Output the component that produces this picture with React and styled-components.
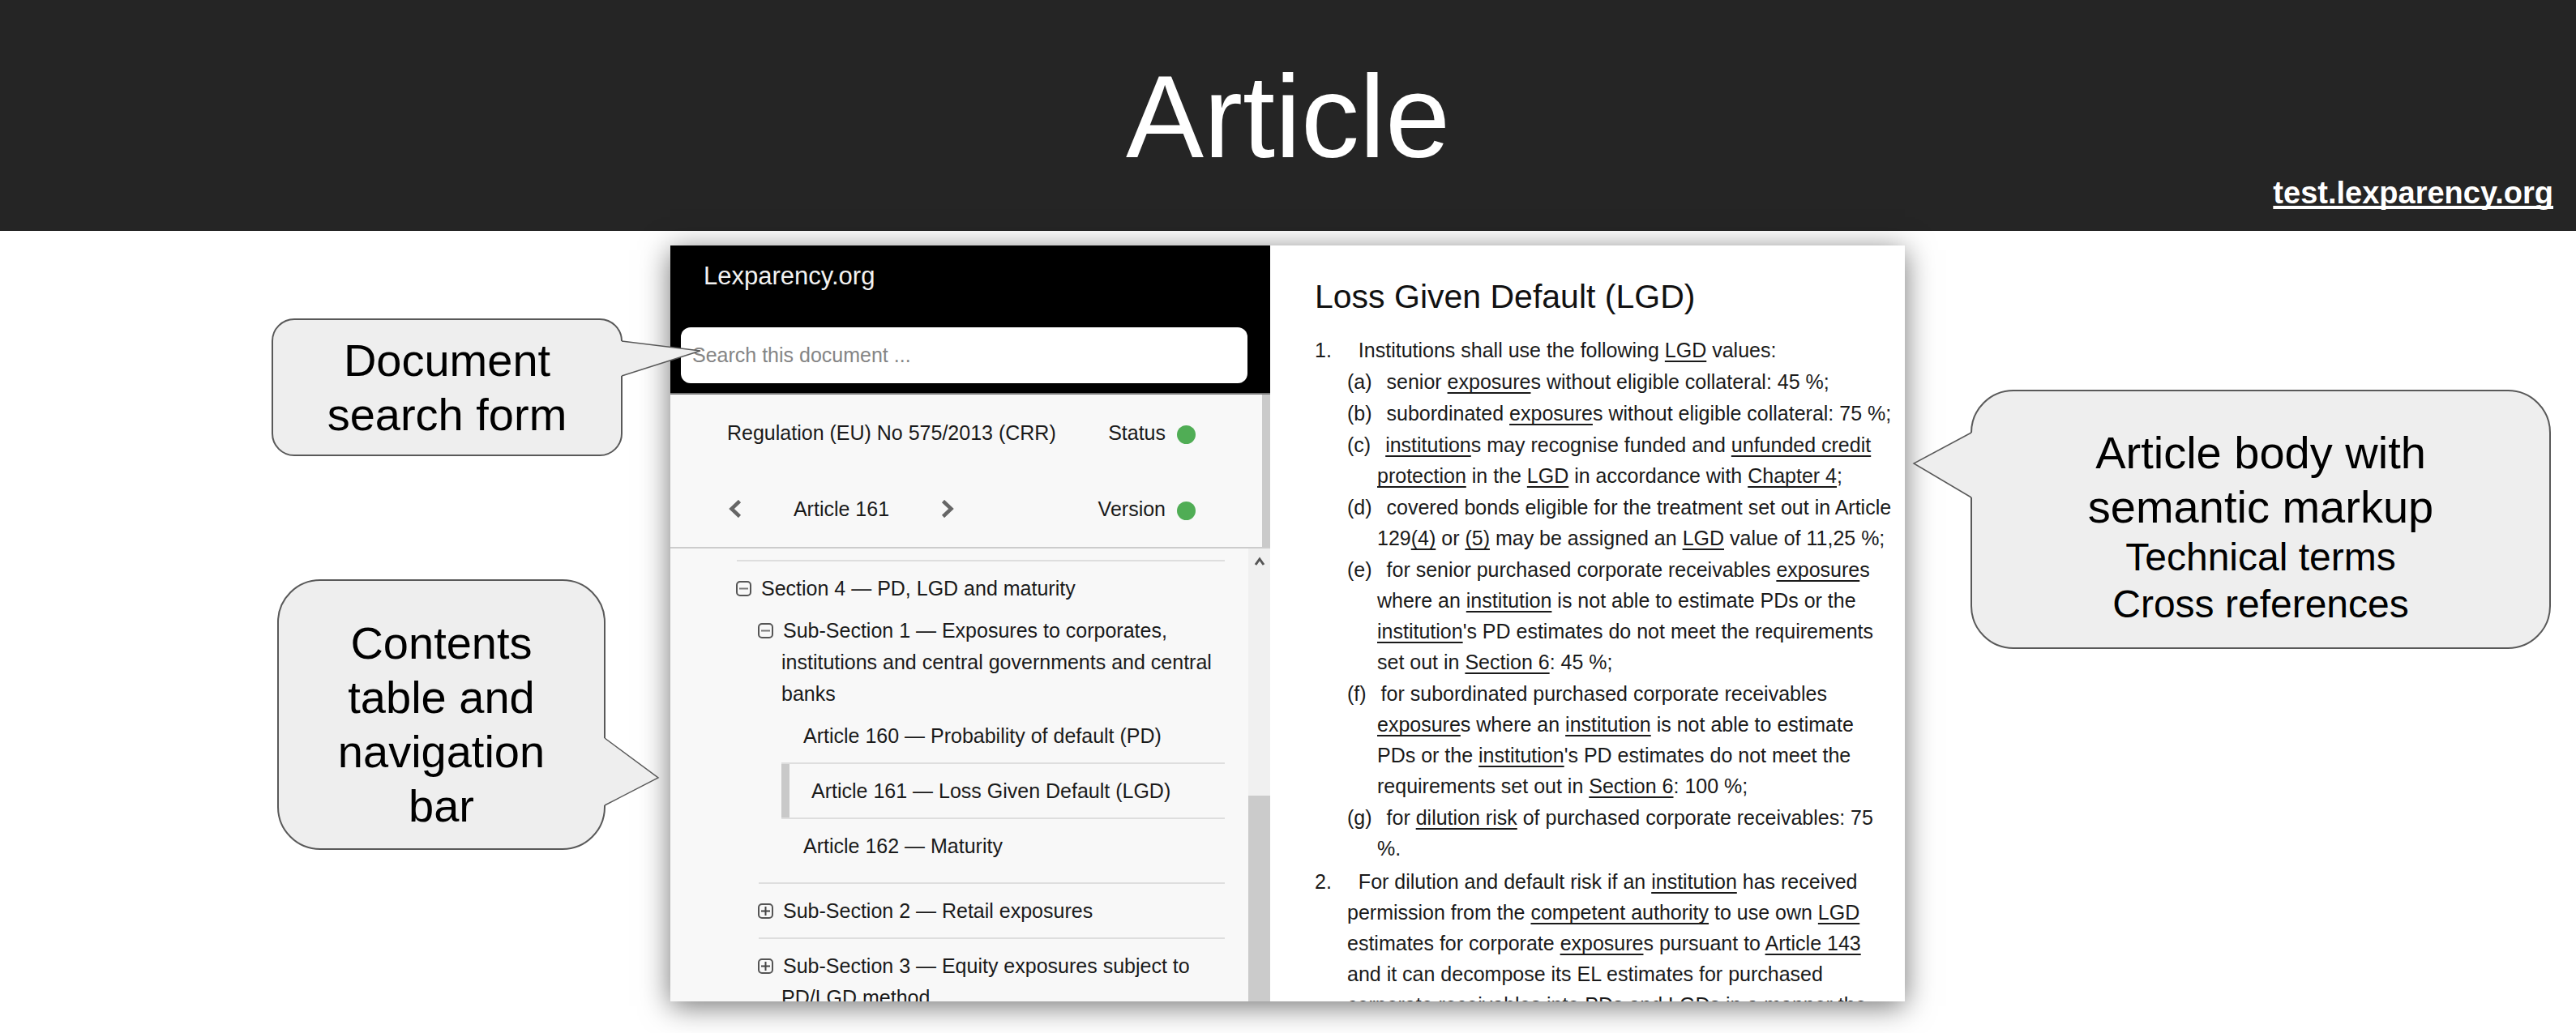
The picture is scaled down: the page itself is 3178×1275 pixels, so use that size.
import React from "react";
import styled, { createGlobalStyle } from "styled-components";

const GlobalStyle = createGlobalStyle`
  *, *::before, *::after { box-sizing: border-box; }
  body { margin: 0; background: #fff; color: #1a1a1a; font-family: "Liberation Sans", Arial, sans-serif; }
  h1, h2, p, ol, ul { margin: 0; padding: 0; font-weight: 400; }
  ol, ul { list-style: none; }
  button { border: 0; padding: 0; background: none; color: inherit; font: inherit; cursor: pointer; }
  a { color: inherit; }
`;

const Banner = styled.header`
  display: grid;
  grid-template-rows: 1fr auto;
  height: 285px;
  padding: 62px 28px 25px;
  background: #252525;
  color: #fff;
`;

const Title = styled.h1`
  font-size: 144px;
  line-height: 166px;
  height: 150px;
  text-align: center;
`;

const SiteLink = styled.a`
  justify-self: end;
  font-size: 38px;
  line-height: 44px;
  font-weight: 700;
  text-decoration-thickness: 4px;
  text-underline-offset: 3px;
  text-decoration-skip-ink: none;
`;

const Stage = styled.main`
  display: grid;
  grid-template-columns: 827fr 1523fr 828fr;
  align-items: start;
  padding: 18px 0 39px;
`;

const Side = styled.div`
  position: relative;
  z-index: 1;
  display: flex;
  flex-direction: column;
  align-items: flex-end;
  padding-top: ${(p) => p.$top}px;
  padding-right: ${(p) => p.$right || 0}px;
`;

const Bubble = styled.aside`
  position: relative;
  width: ${(p) => p.$width}px;
  padding: ${(p) => p.$pad};
  margin: ${(p) => p.$margin || "0"};
  border: 2px solid #595959;
  border-radius: ${(p) => p.$radius}px;
  background: #eee;
  color: #000;
  font-size: 56px;
  line-height: 67px;
  text-align: center;
`;

const Note = styled.p`
  font-size: 48px;
  line-height: 58px;
`;

const Tail = styled.svg`
  position: absolute;
  top: ${(p) => p.$top}px;
  ${(p) => (p.$side === "left" ? "right" : "left")}: calc(100% + 1px);
  overflow: visible;
`;

const CardFrame = styled.div`
  box-shadow: 0 6px 34px rgba(0, 0, 0, 0.55);
`;

const Card = styled.section`
  display: grid;
  grid-template-columns: 740fr 783fr;
  height: 933px;
  overflow: hidden;
  background: #fff;
  font-size: 25px;
`;

const Sidebar = styled.div`
  display: flex;
  flex-direction: column;
  min-width: 0;
  min-height: 0;
  background: #f8f8f8;
`;

const SearchHeader = styled.div`
  padding: 20px 28px 12px 13px;
  background: #000;
  border-bottom: 2px solid #777;
`;

const Brand = styled.a`
  display: block;
  padding-left: 28px;
  margin-bottom: 45px;
  color: #f2f2f2;
  font-size: 31px;
  line-height: 36px;
  text-decoration: none;
`;

const SearchInput = styled.input`
  display: block;
  width: 100%;
  height: 69px;
  padding: 0 14px;
  border: 0;
  border-radius: 12px;
  background: #fff;
  font: 25px "Liberation Sans", Arial, sans-serif;
  &::placeholder { color: #858585; opacity: 1; }
`;

const InfoPanel = styled.div`
  display: grid;
  grid-template-columns: 1fr auto;
  grid-auto-rows: 94px;
  align-items: center;
  padding: 0 82px 0 70px;
  border-right: 10px solid #cacaca;
  height: 188px;
`;

const Pager = styled.nav`
  display: grid;
  grid-template-columns: 20px 242px 20px;
  align-items: center;
  text-align: center;
  button { display: flex; height: 39px; align-items: center; justify-content: center; }
`;

const State = styled.div`
  display: flex;
  align-items: center;
  justify-content: flex-end;
  gap: 14px;
  &::after {
    content: "";
    width: 23px;
    height: 23px;
    margin-top: 4px;
    border-radius: 50%;
    background: #50ad55;
  }
`;

const TreePane = styled.div`
  display: flex;
  flex: 1;
  min-height: 0;
  border-top: 2px solid #ccc;
`;

const Tree = styled.ul`
  flex: 1;
  padding: 14px 29px 0 82px;
  line-height: 39px;
`;

const Branch = styled.li`
  border-top: 2px solid #dedede;
  padding-top: ${(p) => (p.$first ? 0 : 14)}px;
  padding-bottom: ${(p) => (p.$open ? 0 : 13)}px;
  ${(p) => p.$first && "border-top: 0; padding-top: 13px;"}
`;

const Label = styled.div`
  padding-left: 28px;
  text-indent: -29px;
  button {
    display: inline-flex;
    width: 19px;
    height: 19px;
    margin-right: 12px;
    vertical-align: -1px;
    text-indent: 0;
  }
`;

const Children = styled.ul`
  padding-left: 27px;
`;

const Articles = styled.ul`
  padding: 0 0 12px 28px;
`;

const ArticleItem = styled.li`
  padding: 13px 0 13px ${(p) => (p.$current ? 37 : 27)}px;
  border-bottom: ${(p) => (p.$last ? 0 : 2)}px solid #dedede;
  ${(p) => p.$current && "box-shadow: inset 10px 0 #c9c9c9;"}
  & + & { padding-top: 14px; }
  a { text-decoration: none; }
`;

const ScrollTrack = styled.div`
  display: flex;
  flex-direction: column;
  align-items: center;
  width: 27px;
  padding-top: 10px;
  background: #f0f0f0;
`;

const ScrollThumb = styled.div`
  flex: 1;
  width: 100%;
  margin-top: 283px;
  background: #cbcbcb;
`;

const Reader = styled.article`
  padding: 39px 12px 0 55px;
`;

const Heading = styled.h2`
  margin-bottom: 23px;
  font-size: 41px;
  line-height: 48px;
  color: #111;
`;

const Paragraph = styled.li`
  padding-left: 40px;
  margin-bottom: 3px;
  line-height: 38px;
  text-indent: -40px;
`;

const Points = styled.ol`
  text-indent: -37px;
`;

const Point = styled.li`
  padding-left: 37px;
  margin-top: 1px;
`;

const Mark = styled.span`
  margin-right: ${(p) => (p.$wide ? 33 : 18)}px;
`;

const Term = styled.a`
  text-decoration: underline 2px;
  text-underline-offset: 4px;
  text-decoration-skip-ink: none;
`;

const T = ({ children }) => <Term href="#term">{children}</Term>;

const Chevron = ({ flip }) => (
  <svg width="16" height="22" viewBox="0 0 16 22" fill="none" stroke="#666" strokeWidth="4.500">
    <path d={flip ? "M2.500 1.500 L12.500 11 L2.500 20.500" : "M13.500 1.500 L3.500 11 L13.500 20.500"} />
  </svg>
);

const Toggle = ({ open, name }) => (
  <button type="button" aria-label={`Toggle ${name}`} aria-expanded={Boolean(open)}>
    <svg width="19" height="19" viewBox="0 0 19 19" fill="none" stroke="#555" strokeWidth="2">
      <rect x="1" y="1" width="17" height="17" rx="4" />
      <path d={open ? "M4 9.500H15" : "M4 9.500H15M9.500 4V15"} stroke={open ? "#777" : "#444"} />
    </svg>
  </button>
);

const TailShape = ({ side, top, width, height, tip }) => {
  const base = side === "left" ? width : 0;
  const point = side === "left" ? 0 : width;
  const open = side === "left" ? width + 3 : -3;
  return (
    <Tail $side={side} $top={top} width={width} height={height} aria-hidden="true">
      <path d={`M${open} 0H${base}L${point} ${tip}L${base} ${height}H${open}Z`} fill="#eee" />
      <path d={`M${base} 0L${point} ${tip}L${base} ${height}`} fill="none" stroke="#595959" strokeWidth="1.500" />
    </Tail>
  );
};

export default function App() {
  return (
    <>
      <GlobalStyle />
      <Banner>
        <Title>Article</Title>
        <SiteLink href="#site">test.lexparency.org</SiteLink>
      </Banner>
      <Stage>
        <Side $top={90} $right={59}>
          <Bubble $width={433} $radius={28} $pad="16px 40px 16px">
            Document
            <br />
            search form
            <TailShape side="right" top={26} width={97} height={43} tip={12} />
          </Bubble>
          <Bubble $width={405} $radius={53} $pad="43px 50px 19px" $margin="152px 21px 0 0">
            Contents table and navigation bar
            <TailShape side="right" top={194} width={66} height={83} tip={49} />
          </Bubble>
        </Side>
        <CardFrame>
          <Card>
            <Sidebar>
              <SearchHeader>
                <Brand href="#home">Lexparency.org</Brand>
                <SearchInput type="search" aria-label="Search this document" placeholder="Search this document ..." />
              </SearchHeader>
              <InfoPanel>
                <span>Regulation (EU) No 575/2013 (CRR)</span>
                <State>Status</State>
                <Pager aria-label="Article">
                  <button type="button" aria-label="Previous article"><Chevron /></button>
                  <span>Article 161</span>
                  <button type="button" aria-label="Next article"><Chevron flip /></button>
                </Pager>
                <State>Version</State>
              </InfoPanel>
              <TreePane>
                <Tree>
                  <Branch $open>
                    <Label><Toggle open name="Section 4" />Section 4 — PD, LGD and maturity</Label>
                    <Children>
                      <Branch $first $open>
                        <Label><Toggle open name="Sub-Section 1" />Sub-Section 1 — Exposures to corporates, institutions and central governments and central banks</Label>
                        <Articles>
                          <ArticleItem><a href="#160">Article 160 — Probability of default (PD)</a></ArticleItem>
                          <ArticleItem $current><a href="#161">Article 161 — Loss Given Default (LGD)</a></ArticleItem>
                          <ArticleItem $last><a href="#162">Article 162 — Maturity</a></ArticleItem>
                        </Articles>
                      </Branch>
                      <Branch>
                        <Label><Toggle name="Sub-Section 2" />Sub-Section 2 — Retail exposures</Label>
                      </Branch>
                      <Branch>
                        <Label><Toggle name="Sub-Section 3" />Sub-Section 3 — Equity exposures subject to PD/LGD method</Label>
                      </Branch>
                    </Children>
                  </Branch>
                </Tree>
                <ScrollTrack>
                  <svg width="14" height="12" viewBox="0 0 14 12" fill="none" stroke="#555" strokeWidth="3">
                    <path d="M2 10L7 3L12 10" />
                  </svg>
                  <ScrollThumb />
                </ScrollTrack>
              </TreePane>
            </Sidebar>
            <Reader>
              <Heading>Loss Given Default (LGD)</Heading>
              <ol>
                <Paragraph>
                  <Mark $wide>1.</Mark>Institutions shall use the following <T>LGD</T> values:
                  <Points>
                    <Point><Mark>(a)</Mark>senior <T>exposure</T>s without eligible collateral: 45 %;</Point>
                    <Point><Mark>(b)</Mark>subordinated <T>exposure</T>s without eligible collateral: 75 %;</Point>
                    <Point><Mark>(c)</Mark><T>institution</T>s may recognise funded and <T>unfunded credit protection</T> in the <T>LGD</T> in accordance with <T>Chapter 4</T>;</Point>
                    <Point><Mark>(d)</Mark>covered bonds eligible for the treatment set out in Article 129<T>(4)</T> or <T>(5)</T> may be assigned an <T>LGD</T> value of 11,25 %;</Point>
                    <Point><Mark>(e)</Mark>for senior purchased corporate receivables <T>exposure</T>s where an <T>institution</T> is not able to estimate PDs or the <T>institution</T>'s PD estimates do not meet the requirements set out in <T>Section 6</T>: 45 %;</Point>
                    <Point><Mark>(f)</Mark>for subordinated purchased corporate receivables <T>exposure</T>s where an <T>institution</T> is not able to estimate PDs or the <T>institution</T>'s PD estimates do not meet the requirements set out in <T>Section 6</T>: 100 %;</Point>
                    <Point><Mark>(g)</Mark>for <T>dilution risk</T> of purchased corporate receivables: 75 %.</Point>
                  </Points>
                </Paragraph>
                <Paragraph>
                  <Mark $wide>2.</Mark>For dilution and default risk if an <T>institution</T> has received permission from the <T>competent authority</T> to use own <T>LGD</T> estimates for corporate <T>exposure</T>s pursuant to <T>Article 143</T> and it can decompose its EL estimates for purchased corporate receivables into PDs and LGDs in a manner the
                </Paragraph>
              </ol>
            </Reader>
          </Card>
        </CardFrame>
        <Side $top={178}>
          <Bubble $width={716} $radius={53} $pad="42px 60px 24px" $margin="0 31px 0 0">
            Article body with
            <br />
            semantic markup
            <Note>Technical terms</Note>
            <Note>Cross references</Note>
            <TailShape side="left" top={51} width={71} height={80} tip={38} />
          </Bubble>
        </Side>
      </Stage>
    </>
  );
}
